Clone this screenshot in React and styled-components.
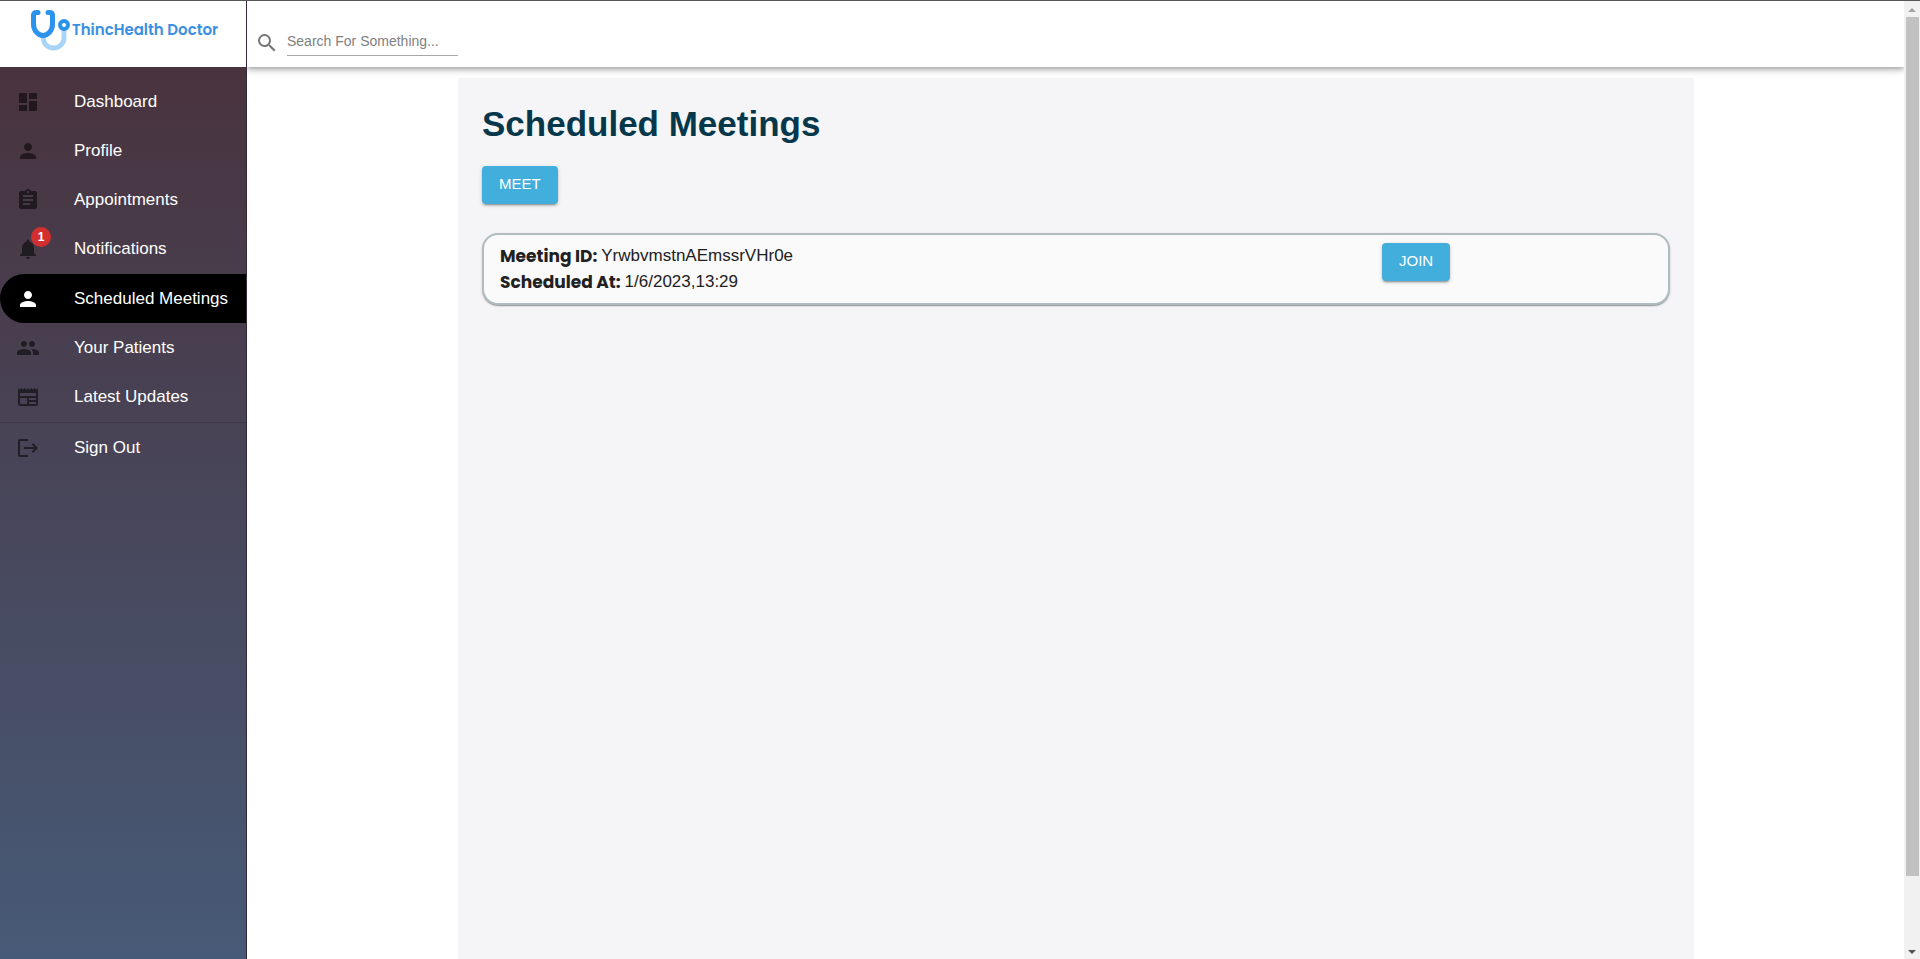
import React from "react";
import styled, { createGlobalStyle } from "styled-components";
import {
  MdDashboard,
  MdPerson,
  MdAssignment,
  MdNotifications,
  MdPeople,
  MdNewspaper,
  MdLogout,
  MdSearch,
} from "react-icons/md";

const GlobalStyle = createGlobalStyle`
  *, *::before, *::after { box-sizing: border-box; }
  body {
    margin: 0;
    background: #fff;
    color: #212121;
    font-family: "Liberation Sans", Arial, sans-serif;
    font-size: 17px;
    line-height: 24px;
  }
`;

const Shell = styled.div`
  display: flex;
  height: 100vh;
  border-top: 1px solid #58565a;
  overflow: hidden;
`;

const Sidebar = styled.aside`
  display: flex;
  flex-direction: column;
  flex: none;
  width: 247px;
  border-right: 1px solid #33283a;
  background: linear-gradient(#49303a, #475a77);
`;

const Brand = styled.a`
  display: flex;
  align-items: center;
  height: 66px;
  padding: 0 0 8px 30px;
  background: #fff;
  color: #3a8fe0;
  font-family: Poppins, Inter, sans-serif;
  font-size: 15px;
  font-weight: 600;
  text-decoration: none;
  white-space: nowrap;

  svg { flex: none; margin-right: 1px; }
`;

const Nav = styled.nav`
  display: flex;
  flex-direction: column;
  padding-top: 10px;
`;

const NavLink = styled.a`
  display: flex;
  align-items: center;
  gap: 34px;
  height: ${(p) => (p.$badged ? 50 : 49)}px;
  padding: 0 16px;
  border-radius: 25px 0 0 25px;
  background: ${(p) => (p.$active ? "#000" : "transparent")};
  color: #fff;
  text-decoration: none;
  white-space: nowrap;
`;

const NavIcon = styled.span`
  position: relative;
  display: flex;
  font-size: 24px;
  color: ${(p) => (p.$active ? "#fff" : "rgba(0, 0, 0, 0.54)")};
`;

const Badge = styled.span`
  position: absolute;
  top: -10px;
  right: -11px;
  width: 20px;
  height: 20px;
  border-radius: 50%;
  background: #d32f2f;
  color: #fff;
  font-size: 12px;
  font-weight: 700;
  line-height: 20px;
  text-align: center;
`;

const Divider = styled.hr`
  width: 100%;
  height: 1px;
  margin: 1px 0 0;
  border: 0;
  background: rgba(0, 0, 0, 0.12);
`;

const Page = styled.div`
  display: flex;
  flex-direction: column;
  flex: 1;
  min-width: 0;
`;

const TopBar = styled.header`
  position: relative;
  display: flex;
  align-items: flex-end;
  flex: none;
  height: 66px;
  padding: 0 8px 11px;
  background: #fff;
  box-shadow: 0 2px 4px -1px rgba(0, 0, 0, 0.2), 0 4px 5px rgba(0, 0, 0, 0.14),
    0 1px 10px rgba(0, 0, 0, 0.12);
  clip-path: inset(0 0 -16px 0);
`;

const SearchLabel = styled.label`
  display: flex;
  align-items: flex-end;
  gap: 8px;
  color: #757575;

  svg { margin-bottom: 1px; font-size: 24px; }
`;

const SearchInput = styled.input`
  width: 171px;
  height: 29px;
  padding: 0 0 1px;
  border: 0;
  border-bottom: 1px solid #a8a8a8;
  outline: 0;
  background: none;
  font: inherit;
  font-size: 14px;

  &::placeholder { color: #808080; opacity: 1; }
`;

const Main = styled.main`
  display: flex;
  flex: 1;
  padding: 11px 210px 0 211px;
`;

const Panel = styled.section`
  flex: 1;
  min-width: 0;
  padding: 24px;
  background: #f5f5f8;
`;

const Title = styled.h1`
  margin: 0 0 21px;
  color: #06374a;
  font-size: 35px;
  line-height: 43px;
`;

const ActionButton = styled.button`
  height: 38px;
  padding: 0 17px 2px;
  border: 0;
  border-radius: 4px;
  background: #42aedc;
  color: #fff;
  font: inherit;
  font-size: 15px;
  text-transform: uppercase;
  box-shadow: 0 3px 1px -2px rgba(0, 0, 0, 0.2), 0 2px 2px rgba(0, 0, 0, 0.14),
    0 1px 5px rgba(0, 0, 0, 0.12);
  cursor: pointer;
`;

const MeetingCard = styled.article`
  display: grid;
  grid-template-columns: 1fr 286px;
  align-items: start;
  margin-top: 29px;
  padding: 8px 0 8px 16px;
  border: 2px solid #afbdc0;
  border-radius: 16px;
  background: #fafafa;
  box-shadow: 0 2px 1px -1px rgba(0, 0, 0, 0.2), 0 1px 1px rgba(0, 0, 0, 0.14),
    0 1px 3px rgba(0, 0, 0, 0.12);
`;

const Details = styled.dl`
  margin: 0;
`;

const DetailRow = styled.div`
  display: flex;
  gap: 4px;
  line-height: 26px;
`;

const Term = styled.dt`
  font-family: Poppins, Inter, sans-serif;
  font-size: 17px;
  font-weight: 700;
`;

const Value = styled.dd`
  margin: 0;
`;

const ScrollTrack = styled.div`
  display: flex;
  flex-direction: column;
  align-items: center;
  justify-content: space-between;
  flex: none;
  width: 16px;
  padding: 7px 0 5px;
  background: #f1f1f1;
`;

const ScrollLane = styled.div`
  flex: 1;
  width: 13px;
  margin: 5px 0 9px;
`;

const ScrollThumb = styled.div`
  height: 93%;
  background: #c1c1c1;
`;

const ScrollArrow = styled.span`
  border: 4px solid transparent;
  ${(p) =>
    p.$up
      ? "border-top: 0; border-bottom-color: #a3a3a3;"
      : "border-bottom: 0; border-top-color: #505050;"}
`;

const links = [
  { label: "Dashboard", icon: MdDashboard },
  { label: "Profile", icon: MdPerson },
  { label: "Appointments", icon: MdAssignment },
  { label: "Notifications", icon: MdNotifications, badge: 1 },
  { label: "Scheduled Meetings", icon: MdPerson, active: true },
  { label: "Your Patients", icon: MdPeople },
  { label: "Latest Updates", icon: MdNewspaper },
];

function NavItem({ label, icon: Icon, badge, active }) {
  return (
    <NavLink
      href="#"
      $active={active}
      $badged={Boolean(badge)}
      aria-current={active ? "page" : undefined}
    >
      <NavIcon $active={active}>
        <Icon />
        {badge && <Badge>{badge}</Badge>}
      </NavIcon>
      {label}
    </NavLink>
  );
}

function StethoscopeLogo() {
  return (
    <svg width="41" height="42" viewBox="0 0 41 42" fill="none" aria-hidden="true">
      <path
        d="M13.500 28v1.500C13.500 35 17.500 39 23.500 39S34 34.500 34 29v-7"
        stroke="#a8d4f8"
        strokeWidth="4.800"
        strokeLinecap="round"
      />
      <path
        d="M8 3.500H6.500Q3.500 3.500 3.500 6.500V15C3.500 21.500 8 26.500 13 26.500S22.500 21.500 22.500 15V6.500Q22.500 3.500 19.500 3.500H18"
        stroke="#2c93ec"
        strokeWidth="5"
        strokeLinecap="round"
      />
      <circle cx="34" cy="16" r="4" fill="#fff" stroke="#2c93ec" strokeWidth="4" />
    </svg>
  );
}

export default function App() {
  return (
    <>
      <GlobalStyle />
      <Shell>
        <Sidebar>
          <Brand href="#">
            <StethoscopeLogo />
            ThincHealth Doctor
          </Brand>
          <Nav>
            {links.map((link) => (
              <NavItem key={link.label} {...link} />
            ))}
            <Divider />
            <NavItem label="Sign Out" icon={MdLogout} />
          </Nav>
        </Sidebar>
        <Page>
          <TopBar>
            <SearchLabel>
              <MdSearch aria-hidden="true" />
              <SearchInput
                type="text"
                aria-label="Search"
                placeholder="Search For Something..."
              />
            </SearchLabel>
          </TopBar>
          <Main>
            <Panel>
              <Title>Scheduled Meetings</Title>
              <ActionButton type="button">Meet</ActionButton>
              <MeetingCard>
                <Details>
                  <DetailRow>
                    <Term>Meeting ID:</Term>
                    <Value>YrwbvmstnAEmssrVHr0e</Value>
                  </DetailRow>
                  <DetailRow>
                    <Term>Scheduled At:</Term>
                    <Value>1/6/2023,13:29</Value>
                  </DetailRow>
                </Details>
                <div>
                  <ActionButton type="button">Join</ActionButton>
                </div>
              </MeetingCard>
            </Panel>
          </Main>
        </Page>
        <ScrollTrack aria-hidden="true">
          <ScrollArrow $up />
          <ScrollLane>
            <ScrollThumb />
          </ScrollLane>
          <ScrollArrow />
        </ScrollTrack>
      </Shell>
    </>
  );
}
